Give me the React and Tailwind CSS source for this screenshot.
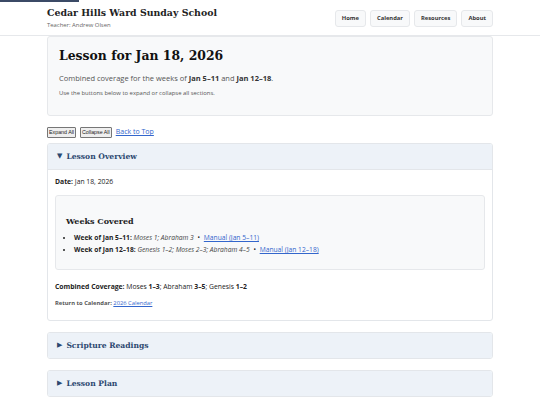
import { useState } from "react";

const serif = { fontFamily: '"DejaVu Serif", Georgia, serif' };

const navLinks = ["Home", "Calendar", "Resources", "About"];

function Section({ title, open, onToggle, children }) {
  return (
    <div className="rounded-[3px] border border-[#e3e6ea] bg-white overflow-hidden">
      <button
        onClick={onToggle}
        className="w-full h-[25px] px-[9px] flex items-center gap-[4px] bg-[#edf2f8] text-left text-[#2c4870] text-[7.6px] font-bold"
        style={serif}
      >
        <span className="text-[7px]">{open ? "▼" : "▶"}</span>
        {title}
      </button>
      {open && <div className="border-t border-[#e3e6ea]">{children}</div>}
    </div>
  );
}

export default function App() {
  const [open, setOpen] = useState({ overview: true, readings: false, plan: false });
  const toggle = (k) => setOpen((p) => ({ ...p, [k]: !p[k] }));
  const setAll = (v) => setOpen({ overview: v, readings: v, plan: v });

  return (
    <div className="min-h-screen bg-white text-[#222]" style={{ fontFamily: '"Open Sans", "Noto Sans", sans-serif' }}>
      <div className="h-[2px] w-[79px] bg-[#3b4a66]" />
      <header className="border-b border-[#e6e8eb]">
        <div className="w-[446px] mx-auto h-[33px] flex items-center justify-between">
          <div className="-mt-[3px]">
            <h1 className="text-[9.4px] font-bold leading-[16px] text-[#222]" style={serif}>
              Cedar Hills Ward Sunday School
            </h1>
            <p className="text-[5.9px] text-[#666] leading-[8px]">Teacher: Andrew Olsen</p>
          </div>
          <nav className="flex gap-[4px]">
            {navLinks.map((l) => (
              <a
                key={l}
                href="#"
                className="h-[17px] px-[6px] flex items-center rounded-[3px] border border-[#e6e8eb] bg-[#f8f9fa] text-[5.8px] font-bold text-[#333]"
              >
                {l}
              </a>
            ))}
          </nav>
        </div>
      </header>

      <main className="w-[446px] mx-auto">
        <div className="h-[80px] rounded-[3px] border border-[#e6e8eb] bg-[#f8f9fa] px-[11px] pt-[9px]">
          <h2 className="text-[12.4px] font-bold leading-[20px] text-[#111]" style={serif}>
            Lesson for Jan 18, 2026
          </h2>
          <p className="mt-[6px] text-[7.5px] text-[#555] leading-[12px]">
            Combined coverage for the weeks of <b className="text-[#333]">Jan 5–11</b> and{" "}
            <b className="text-[#333]">Jan 12–18</b>.
          </p>
          <p className="mt-[5px] text-[5.9px] text-[#555] leading-[9px]">
            Use the buttons below to expand or collapse all sections.
          </p>
        </div>

        <div className="mt-[11px] flex items-center gap-[4px]" style={{ fontFamily: '"Liberation Sans", Arial, sans-serif' }}>
          <button
            onClick={() => setAll(true)}
            className="h-[11px] px-[1px] text-[5.3px] leading-none border border-[#767676] bg-[#efefef] rounded-[1px]"
          >
            Expand All
          </button>
          <button
            onClick={() => setAll(false)}
            className="h-[11px] px-[1px] text-[5.3px] leading-none border border-[#767676] bg-[#efefef] rounded-[1px]"
          >
            Collapse All
          </button>
          <a href="#" className="text-[7px] text-[#3366cc] underline" style={{ fontFamily: '"Open Sans", sans-serif' }}>
            Back to Top
          </a>
        </div>

        <div className="mt-[5px] flex flex-col gap-[11px]">
          <Section title="Lesson Overview" open={open.overview} onToggle={() => toggle("overview")}>
            <div className="px-[7px] pt-[7px] pb-[12px]">
              <p className="text-[6.8px] leading-[10px]">
                <b>Date:</b> Jan 18, 2026
              </p>
              <div className="mt-[8px] h-[75px] rounded-[3px] border border-[#e6e8eb] bg-[#f8f9fa] px-[10px] pt-[19px]">
                <h3 className="text-[8px] font-bold leading-[12px] text-[#222]" style={serif}>
                  Weeks Covered
                </h3>
                <ul className="mt-[5px] text-[6.7px] leading-[12px] list-disc pl-[8px]">
                  <li>
                    <b>Week of Jan 5–11:</b> <i className="text-[#444]">Moses 1; Abraham 3</i>{" "}
                    <span className="mx-[2px]">•</span>{" "}
                    <a href="#" className="text-[#3366cc] underline">Manual (Jan 5–11)</a>
                  </li>
                  <li>
                    <b>Week of Jan 12–18:</b> <i className="text-[#444]">Genesis 1–2; Moses 2–3; Abraham 4–5</i>{" "}
                    <span className="mx-[2px]">•</span>{" "}
                    <a href="#" className="text-[#3366cc] underline">Manual (Jan 12–18)</a>
                  </li>
                </ul>
              </div>
              <p className="mt-[12px] text-[6.8px] leading-[10px]">
                <b>Combined Coverage:</b> Moses <b>1–3</b>; Abraham <b>3–5</b>; Genesis <b>1–2</b>
              </p>
              <p className="mt-[7px] text-[5.8px] leading-[9px] text-[#555]">
                <b>Return to Calendar:</b>{" "}
                <a href="#" className="text-[#3366cc] underline font-normal">2026 Calendar</a>
              </p>
            </div>
          </Section>
          <Section title="Scripture Readings" open={open.readings} onToggle={() => toggle("readings")} />
          <Section title="Lesson Plan" open={open.plan} onToggle={() => toggle("plan")} />
        </div>
      </main>
    </div>
  );
}
